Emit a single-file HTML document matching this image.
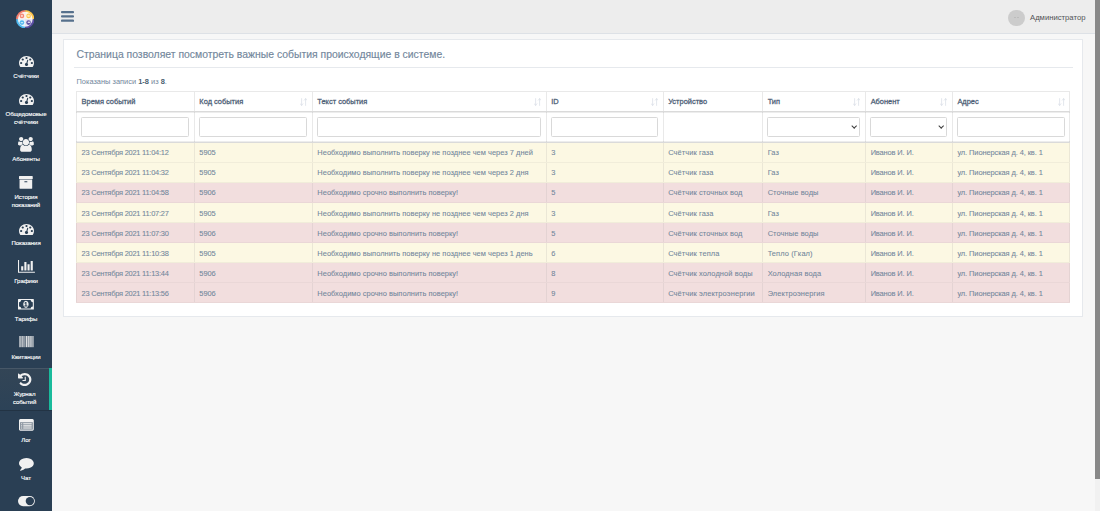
<!DOCTYPE html>
<html lang="ru">
<head>
<meta charset="utf-8">
<title>Журнал событий</title>
<style>
*{box-sizing:border-box;margin:0;padding:0}
html,body{width:1100px;height:511px;overflow:hidden}
body{background:#f7f7f7;font-family:"Liberation Sans",sans-serif;color:#73879c;font-size:7.45px;position:relative}
/* sidebar */
#side{position:absolute;left:0;top:0;width:52px;height:511px;background:#2a3f54}
#logo{position:absolute;left:15.6px;top:9.7px;width:18.5px;height:18.5px}
.ic{position:absolute;display:block;overflow:visible}
.lb{position:absolute;left:0;text-align:center;font-size:6.1px;letter-spacing:-.1px;line-height:8px;height:8px;color:#fff;-webkit-text-stroke:.12px #fff;white-space:nowrap}
#act{position:absolute;left:0;top:368.3px;width:52px;height:42.2px;background:linear-gradient(#334556,#2c4257);border-right:3.2px solid #1abb9c;box-shadow:inset 0 1px 0 rgba(255,255,255,.1),0 1px 0 rgba(0,0,0,.18)}
/* top bar */
#top{position:absolute;left:52px;top:0;width:1043px;height:33.7px;background:#ededed;border-bottom:1px solid #dde1e6}
#burger{position:absolute;left:8.5px;top:11.4px;width:13.1px;height:10.8px;display:block}
#ava{position:absolute;left:956px;top:9.5px;width:16.5px;height:16.5px;border-radius:50%;background:#ccc}
#ava i{position:absolute;top:7.8px;width:2.1px;height:.9px;background:#bcbcbc}#ava i:first-child{left:5.6px}#ava i:last-child{left:9.1px}
#adm{position:absolute;left:978px;top:12.7px;font-size:7.7px;line-height:9px;color:#515356;white-space:nowrap}
/* scrollbar */
#sbt{position:absolute;left:1094.5px;top:0;width:5.5px;height:511px;background:#f1f1f1}
#sbh{position:absolute;left:1095px;top:0;width:5px;height:478.5px;background:#888}
/* panel */
#panel{position:absolute;left:63px;top:39px;width:1020px;height:277.5px;background:#fff;border:1px solid #e6e9ed}
#title{position:absolute;left:76.5px;top:48.2px;font-size:10.41px;line-height:13px;color:#73879c;-webkit-text-stroke:.15px #73879c;white-space:nowrap}
#hr{position:absolute;left:73.5px;top:66.7px;width:999px;height:1.1px;background:#e6e9ed}
#info{position:absolute;left:76.5px;top:77px;font-size:7.45px;line-height:9px;white-space:nowrap}
#info b{color:#4b5f71}
/* table */
#tbl{position:absolute;left:76px;top:90.6px;width:993.3px;border-collapse:collapse;table-layout:fixed;font-size:7.45px}
#tbl td,#tbl th{border:1px solid #e4e4e4;padding:0 0 0 4.6px;text-align:left;vertical-align:middle;white-space:nowrap;overflow:hidden;position:relative}
#tbl th{height:20.6px;font-weight:normal;color:#4d6076;-webkit-text-stroke:.27px #4d6076;letter-spacing:0;border-color:#e9e9e9;border-bottom:1px solid #dadada;padding-top:.6px;padding-bottom:0}
#tbl tr.f td{height:30.4px;border-color:#e9e9e9;border-bottom:1px solid #dadada;background:#fff}
.ln{position:absolute;left:76px;width:994px;height:1px;background:rgba(0,0,0,.07)}
#tbl tbody tr.r td{height:20.09px;padding-top:1.4px;-webkit-text-stroke:.08px #73879c}
#tbl tr.r td:nth-child(1){letter-spacing:-.23px}
#tbl tr.r td:nth-child(2){letter-spacing:-.1px}
#tbl tr.r td:nth-child(3){letter-spacing:.03px}
#tbl tr.r td:nth-child(5){letter-spacing:.1px}
#tbl tr.r td:nth-child(6){letter-spacing:.1px}
#tbl tr.r td:nth-child(7){letter-spacing:-.13px}
#tbl tr.r td:nth-child(8){letter-spacing:-.09px}
tr.w td{background:#fcf8e3;border-color:#f1edda #ebe7d6!important}
tr.d td{background:#f2dede;border-color:#ead7d7 #e4d3d3!important}
.in{display:block;width:calc(100% - 4.1px);height:20px;margin-left:-.5px;border:1px solid #d9d9d9;border-radius:1.5px;background:#fff}
.so{position:absolute;right:4.6px;top:6.2px;width:7.2px;height:8px;display:block}
.sel{position:relative}
.sel:after{content:"";position:absolute;right:2.7px;top:6.1px;width:3.4px;height:3.4px;border-right:1.25px solid #3a3a3a;border-bottom:1.25px solid #3a3a3a;transform:rotate(45deg)}
</style>
</head>
<body>
<!--SIDE-->
<div id="side">
<svg id="logo" viewBox="0 0 100 100"><path d="M50 50V0A50 50 0 0 0 0 50z" fill="#f37e6c"/><path d="M50 50H100A50 50 0 0 0 50 0z" fill="#fdc54d"/><path d="M50 50H0A50 50 0 0 0 50 100z" fill="#4fb9f0"/><path d="M50 50V100A50 50 0 0 0 100 50z" fill="#5a4da2"/><circle cx="50" cy="50" r="40" fill="#fff" fill-opacity=".86"/><circle cx="50" cy="50" r="34" fill="none" stroke="#fff" stroke-opacity=".55" stroke-width="2"/><circle cx="32" cy="32" r="12.5" fill="#f58674"/><circle cx="68" cy="32" r="12.5" fill="#fdc551"/><circle cx="32" cy="68" r="12.5" fill="#55b9ee"/><circle cx="68" cy="68" r="12.5" fill="#5f52a6"/><circle cx="32" cy="32" r="6" fill="#fbd3cc"/><rect x="62" y="26" width="12" height="12" rx="2" fill="#fee9b4"/><rect x="25" y="65" width="14" height="6" rx="3" fill="#c4e6fa"/><ellipse cx="70" cy="66" rx="8" ry="4" fill="#e8e5f5"/></svg>
<div id="act"></div>
<svg class="ic" style="left:18.60px;top:55.80px;width:15.00px;height:11.00px" viewBox="0 256 1792 1408" preserveAspectRatio="none"><path fill="#f1f1f1" d="M384 1152q0-53-37.500-90.500t-90.500-37.500-90.500 37.500-37.500 90.500 37.500 90.500 90.500 37.500 90.500-37.500 37.500-90.500zm192-448q0-53-37.500-90.500t-90.500-37.500-90.500 37.500-37.500 90.500 37.500 90.500 90.500 37.500 90.500-37.500 37.500-90.500zm428 481l101-382q6-26-7.500-48.500t-38.500-29.500-48 6.500-30 39.500l-101 382q-60 5-107 43.500t-63 98.500q-20 77 20 146t117 89 146-20 89-117q16-60-6-117t-72-91zm660-33q0-53-37.500-90.500t-90.500-37.500-90.500 37.500-37.500 90.500 37.500 90.500 90.500 37.500 90.500-37.500 37.500-90.500zm-640-640q0-53-37.500-90.500t-90.500-37.500-90.500 37.500-37.500 90.500 37.500 90.500 90.500 37.500 90.500-37.500 37.500-90.500zm448 192q0-53-37.500-90.500t-90.500-37.500-90.500 37.500-37.500 90.500 37.500 90.500 90.500 37.500 90.500-37.500 37.500-90.500zm320 448q0 261-141 483-19 29-54 29h-1402q-35 0-54-29-141-221-141-483 0-182 71-348t191-286 286-191 348-71 348 71 286 191 191 286 71 348z"/></svg>
<div class="lb" style="top:71.60px;width:52px">Счётчики</div>
<svg class="ic" style="left:18.60px;top:94.30px;width:15.00px;height:11.00px" viewBox="0 256 1792 1408" preserveAspectRatio="none"><path fill="#f1f1f1" d="M384 1152q0-53-37.500-90.500t-90.500-37.500-90.500 37.500-37.500 90.500 37.500 90.500 90.500 37.500 90.500-37.500 37.500-90.500zm192-448q0-53-37.500-90.500t-90.500-37.500-90.500 37.500-37.500 90.500 37.500 90.500 90.500 37.500 90.500-37.500 37.500-90.500zm428 481l101-382q6-26-7.500-48.500t-38.500-29.500-48 6.500-30 39.500l-101 382q-60 5-107 43.500t-63 98.500q-20 77 20 146t117 89 146-20 89-117q16-60-6-117t-72-91zm660-33q0-53-37.500-90.500t-90.500-37.500-90.500 37.500-37.500 90.500 37.500 90.500 90.500 37.500 90.500-37.500 37.500-90.500zm-640-640q0-53-37.500-90.500t-90.500-37.500-90.500 37.500-37.500 90.500 37.500 90.500 90.500 37.500 90.500-37.500 37.500-90.500zm448 192q0-53-37.500-90.500t-90.500-37.500-90.500 37.500-37.500 90.500 37.500 90.500 90.500 37.500 90.500-37.500 37.500-90.500zm320 448q0 261-141 483-19 29-54 29h-1402q-35 0-54-29-141-221-141-483 0-182 71-348t191-286 286-191 348-71 348 71 286 191 191 286 71 348z"/></svg>
<div class="lb" style="top:109.50px;width:52px">Общедомовые</div>
<div class="lb" style="top:117.90px;width:52px">счётчики</div>
<svg class="ic" style="left:18.02px;top:137.05px;width:15.86px;height:14.80px" viewBox="0 0 1920 1792" preserveAspectRatio="none"><path fill="#f1f1f1" d="M593 896q-162 5-265 128h-134q-82 0-138-40.500t-56-118.500q0-353 124-353 6 0 43.500 21t97.500 42.500 119 21.500q67 0 133-23-5 37-5 66 0 139 81 256zm1071 637q0 120-73 189.500t-194 69.500h-874q-121 0-194-69.500t-73-189.500q0-53 3.500-103.500t14-109 26.500-108.500 43-97.500 62-81 85.500-53.500 111.500-20q10 0 43 21.500t73 48 107 48 135 21.500 135-21.500 107-48 73-48 43-21.500q61 0 111.500 20t85.500 53.500 62 81 43 97.500 26.500 108.500 14 109 3.500 103.500zm-1024-1277q0 106-75 181t-181 75-181-75-75-181 75-181 181-75 181 75 75 181zm704 384q0 159-112.500 271.500t-271.500 112.500-271.500-112.500-112.500-271.500 112.500-271.500 271.500-112.500 271.500 112.500 112.500 271.500zm576 225q0 78-56 118.500t-138 40.500h-134q-103-123-265-128 81-117 81-256 0-29-5-66 66 23 133 23 59 0 119-21.500t97.500-42.500 43.500-21q124 0 124 353zm-128-609q0 106-75 181t-181 75-181-75-75-181 75-181 181-75 181 75 75 181z"/></svg>
<div class="lb" style="top:155.30px;width:52px">Абоненты</div>
<svg class="ic" style="left:19.18px;top:176.11px;width:13.74px;height:12.69px" viewBox="64 128 1664 1536" preserveAspectRatio="none"><path fill="#f1f1f1" d="M1088 832q0-26-19-45t-45-19h-256q-26 0-45 19t-19 45 19 45 45 19h256q26 0 45-19t19-45zm576-192v960q0 26-19 45t-45 19h-1408q-26 0-45-19t-19-45v-960q0-26 19-45t45-19h1408q26 0 45 19t19 45zm64-448v256q0 26-19 45t-45 19h-1536q-26 0-45-19t-19-45v-256q0-26 19-45t45-19h1536q26 0 45 19t19 45z"/></svg>
<div class="lb" style="top:193.30px;width:52px">История</div>
<div class="lb" style="top:201.20px;width:52px">показаний</div>
<svg class="ic" style="left:18.60px;top:223.50px;width:15.00px;height:11.00px" viewBox="0 256 1792 1408" preserveAspectRatio="none"><path fill="#f1f1f1" d="M384 1152q0-53-37.500-90.500t-90.500-37.500-90.500 37.500-37.500 90.500 37.500 90.500 90.500 37.500 90.500-37.500 37.500-90.500zm192-448q0-53-37.500-90.500t-90.500-37.500-90.500 37.500-37.500 90.500 37.500 90.500 90.500 37.500 90.500-37.500 37.500-90.500zm428 481l101-382q6-26-7.500-48.500t-38.500-29.500-48 6.500-30 39.500l-101 382q-60 5-107 43.500t-63 98.500q-20 77 20 146t117 89 146-20 89-117q16-60-6-117t-72-91zm660-33q0-53-37.500-90.500t-90.500-37.500-90.500 37.500-37.500 90.500 37.500 90.500 90.500 37.500 90.500-37.500 37.500-90.500zm-640-640q0-53-37.500-90.500t-90.500-37.500-90.500 37.500-37.500 90.500 37.500 90.500 90.500 37.500 90.500-37.500 37.500-90.500zm448 192q0-53-37.500-90.500t-90.500-37.500-90.500 37.500-37.500 90.500 37.500 90.500 90.500 37.500 90.500-37.500 37.500-90.500zm320 448q0 261-141 483-19 29-54 29h-1402q-35 0-54-29-141-221-141-483 0-182 71-348t191-286 286-191 348-71 348 71 286 191 191 286 71 348z"/></svg>
<div class="lb" style="top:239.00px;width:52px">Показания</div>
<svg class="ic" style="left:17.64px;top:259.71px;width:16.91px;height:12.69px" viewBox="0 128 2048 1536" preserveAspectRatio="none"><path fill="#f1f1f1" d="M640 896v512h-256v-512h256zm384-512v1024h-256v-1024h256zm1024 1152v128h-2048v-1536h128v1408h1920zm-640-896v768h-256v-768h256zm384-384v1152h-256v-1152h256z"/></svg>
<div class="lb" style="top:276.90px;width:52px">Графики</div>
<svg class="ic" style="left:18.12px;top:298.91px;width:15.86px;height:10.57px" viewBox="0 256 1920 1280" preserveAspectRatio="none"><path fill="#f1f1f1" d="M768 1152h384v-96h-128v-448h-114l-148 137 77 80q42-37 55-57h2v288h-128v96zm512-256q0 70-21 142t-59.500 134-101.500 101-138 39-138-39-101.500-101-59.500-134-21-142 21-142 59.500-134 101.500-101 138-39 138 39 101.500 101 59.500 134 21 142zm512 256v-512q-106 0-181-75t-75-181h-1152q0 106-75 181t-181 75v512q106 0 181 75t75 181h1152q0-106 75-181t181-75zm128-832v1152q0 26-19 45t-45 19h-1792q-26 0-45-19t-19-45v-1152q0-26 19-45t45-19h1792q26 0 45 19t19 45z"/></svg>
<div class="lb" style="top:314.70px;width:52px">Тарифы</div>
<svg class="ic" style="left:18.90px;top:335.55px;width:14.6px;height:11.2px" viewBox="0 0 146 112" preserveAspectRatio="none"><g fill="#f1f1f1"><rect x="0" y="0" width="5" height="112"/><rect x="8" y="0" width="3" height="112"/><rect x="14" y="0" width="6" height="112"/><rect x="24" y="0" width="5" height="112"/><rect x="33" y="0" width="11" height="112"/><rect x="48" y="0" width="5" height="112"/><rect x="56" y="0" width="3" height="112"/><rect x="62" y="0" width="3" height="112"/><rect x="69" y="0" width="10" height="112"/><rect x="83" y="0" width="5" height="112"/><rect x="92" y="0" width="10" height="112"/><rect x="105" y="0" width="5" height="112"/><rect x="113" y="0" width="8" height="112"/><rect x="124" y="0" width="10" height="112"/><rect x="136" y="0" width="3" height="112"/><rect x="141" y="0" width="5" height="112"/></g></svg>
<div class="lb" style="top:352.60px;width:52px">Квитанции</div>
<svg class="ic" style="left:17.95px;top:373.05px;width:13.40px;height:13.00px" viewBox="0 128 1536 1536" preserveAspectRatio="none"><path fill="#f1f1f1" d="M1536 896q0 156-61 298t-164 245-245 164-298 61q-172 0-327-72.500t-264-204.500q-7-10-6.500-22.500t8.500-20.500l137-138q10-9 25-9 16 2 23 12 73 95 179 147t225 52q104 0 198.500-40.500t163.500-109.500 109.500-163.500 40.500-198.500-40.500-198.500-109.500-163.500-163.500-109.500-198.500-40.500q-98 0-188 35.500t-160 101.500l137 138q31 30 14 69-17 40-59 40h-448q-26 0-45-19t-19-45v-448q0-42 40-59 39-17 69 14l130 129q107-101 244.500-156.500t284.500-55.500q156 0 298 61t245 164 164 245 61 298zm-640-288v448q0 14-9 23t-23 9h-320q-14 0-23-9t-9-23v-64q0-14 9-23t23-9h224v-352q0-14 9-23t23-9h64q14 0 23 9t9 23z"/></svg>
<div class="lb" style="top:390.30px;width:49.1px">Журнал</div>
<div class="lb" style="top:398.30px;width:49.1px">событий</div>
<svg class="ic" style="left:18.80px;top:418.99px;width:14.80px;height:11.63px" viewBox="0 128 1792 1408" preserveAspectRatio="none"><rect x="128" y="512" width="1536" height="896" fill="#f1f1f1" fill-opacity=".5"/><path fill="#f1f1f1" d="M384 1184v64q0 13-9.500 22.500t-22.500 9.500h-64q-13 0-22.500-9.500t-9.500-22.500v-64q0-13 9.500-22.500t22.500-9.500h64q13 0 22.500 9.500t9.500 22.500zm0-256v64q0 13-9.500 22.500t-22.500 9.500h-64q-13 0-22.500-9.500t-9.500-22.500v-64q0-13 9.500-22.500t22.500-9.500h64q13 0 22.500 9.500t9.500 22.500zm0-256v64q0 13-9.500 22.500t-22.500 9.500h-64q-13 0-22.500-9.500t-9.500-22.500v-64q0-13 9.500-22.500t22.500-9.500h64q13 0 22.500 9.500t9.500 22.500zm1152 512v64q0 13-9.500 22.500t-22.500 9.500h-960q-13 0-22.500-9.500t-9.500-22.500v-64q0-13 9.500-22.500t22.500-9.500h960q13 0 22.500 9.500t9.500 22.500zm0-256v64q0 13-9.500 22.500t-22.500 9.500h-960q-13 0-22.500-9.500t-9.500-22.500v-64q0-13 9.500-22.500t22.500-9.500h960q13 0 22.500 9.500t9.500 22.500zm0-256v64q0 13-9.500 22.500t-22.500 9.500h-960q-13 0-22.500-9.500t-9.500-22.500v-64q0-13 9.500-22.500t22.500-9.500h960q13 0 22.500 9.500t9.500 22.500zm128 704v-832q0-13-9.500-22.500t-22.500-9.500h-1472q-13 0-22.500 9.500t-9.500 22.500v832q0 13 9.500 22.500t22.500 9.500h1472q13 0 22.500-9.500t9.500-22.500zm128-1088v1088q0 66-47 113t-113 47h-1472q-66 0-113-47t-47-113v-1088q0-66 47-113t113-47h1472q66 0 113 47t47 113z"/></svg>
<div class="lb" style="top:436.20px;width:52px">Лог</div>
<svg class="ic" style="left:18.80px;top:458.06px;width:14.80px;height:12.69px" viewBox="0 256 1792 1536.3" preserveAspectRatio="none"><path fill="#f1f1f1" d="M1792 896q0 174-120 321.500t-326 233-450 85.500q-70 0-145-8-198 175-460 242-49 14-114 22-17 2-30.500-9t-17.500-29v-1q-3-4-.5-12t2-10 4.500-9.500l6-9 7-8.500 8-9q7-8 31-34.500t34.500-38 31-39.500 32.500-51 27-59 26-76q-157-89-247.500-220t-90.500-281q0-130 71-248.500t191-204.500 286-136.500 348-50.500q244 0 450 85.500t326 233 120 321.500z"/></svg>
<div class="lb" style="top:474.00px;width:52px">Чат</div>
<svg class="ic" style="left:17.75px;top:496.15px;width:16.9px;height:10.2px" viewBox="0 0 169 102"><rect x="0" y="0" width="169" height="102" rx="51" fill="#f1f1f1"/><circle cx="119" cy="51" r="42" fill="#2a3f54"/></svg>
</div>
<!--/SIDE-->
<div id="top">
  <svg id="burger" viewBox="0 0 131 108"><g fill="#56708c"><rect x="0" y="0" width="131" height="22" rx="9"/><rect x="0" y="43" width="131" height="22" rx="9"/><rect x="0" y="86" width="131" height="22" rx="9"/></g></svg>
  <div id="ava"><i></i><i></i></div>
  <div id="adm">Администратор</div>
</div>
<div id="panel"></div>
<div id="title">Страница позволяет посмотреть важные события происходящие в системе.</div>
<div id="hr"></div>
<div id="info">Показаны записи <b>1-8</b> из <b>8</b>.</div>
<table id="tbl">
<colgroup><col style="width:117.75px"><col style="width:118px"><col style="width:233.8px"><col style="width:117px"><col style="width:99.5px"><col style="width:103px"><col style="width:86.75px"><col style="width:117.5px"></colgroup>
<thead>
<tr><th>Время событий</th><th>Код события<svg class="so" viewBox="0 0 72 80"><g fill="none" stroke="#d6dce5" stroke-width="7" stroke-linecap="round" stroke-linejoin="round"><path d="M16 6V74M3 58L16 74L29 58"/><path d="M56 74V6M43 22L56 6L69 22"/></g></svg></th><th>Текст события<svg class="so" viewBox="0 0 72 80"><g fill="none" stroke="#d6dce5" stroke-width="7" stroke-linecap="round" stroke-linejoin="round"><path d="M16 6V74M3 58L16 74L29 58"/><path d="M56 74V6M43 22L56 6L69 22"/></g></svg></th><th>ID<svg class="so" viewBox="0 0 72 80"><g fill="none" stroke="#d6dce5" stroke-width="7" stroke-linecap="round" stroke-linejoin="round"><path d="M16 6V74M3 58L16 74L29 58"/><path d="M56 74V6M43 22L56 6L69 22"/></g></svg></th><th>Устройство</th><th>Тип<svg class="so" viewBox="0 0 72 80"><g fill="none" stroke="#d6dce5" stroke-width="7" stroke-linecap="round" stroke-linejoin="round"><path d="M16 6V74M3 58L16 74L29 58"/><path d="M56 74V6M43 22L56 6L69 22"/></g></svg></th><th>Абонент<svg class="so" viewBox="0 0 72 80"><g fill="none" stroke="#d6dce5" stroke-width="7" stroke-linecap="round" stroke-linejoin="round"><path d="M16 6V74M3 58L16 74L29 58"/><path d="M56 74V6M43 22L56 6L69 22"/></g></svg></th><th>Адрес<svg class="so" viewBox="0 0 72 80"><g fill="none" stroke="#d6dce5" stroke-width="7" stroke-linecap="round" stroke-linejoin="round"><path d="M16 6V74M3 58L16 74L29 58"/><path d="M56 74V6M43 22L56 6L69 22"/></g></svg></th></tr>
<tr class="f"><td><span class="in"></span></td><td><span class="in"></span></td><td><span class="in"></span></td><td><span class="in"></span></td><td></td><td><span class="in sel"></span></td><td><span class="in sel"></span></td><td><span class="in"></span></td></tr>
</thead>
<tbody>
<tr class="r w"><td>23 Сентября 2021 11:04:12</td><td>5905</td><td>Необходимо выполнить поверку не позднее чем через 7 дней</td><td>3</td><td>Счётчик газа</td><td>Газ</td><td>Иванов И. И.</td><td>ул. Пионерская д. 4, кв. 1</td></tr>
<tr class="r w"><td>23 Сентября 2021 11:04:32</td><td>5905</td><td>Необходимо выполнить поверку не позднее чем через 2 дня</td><td>3</td><td>Счётчик газа</td><td>Газ</td><td>Иванов И. И.</td><td>ул. Пионерская д. 4, кв. 1</td></tr>
<tr class="r d"><td>23 Сентября 2021 11:04:58</td><td>5906</td><td>Необходимо срочно выполнить поверку!</td><td>5</td><td>Счётчик сточных вод</td><td>Сточные воды</td><td>Иванов И. И.</td><td>ул. Пионерская д. 4, кв. 1</td></tr>
<tr class="r w"><td>23 Сентября 2021 11:07:27</td><td>5905</td><td>Необходимо выполнить поверку не позднее чем через 2 дня</td><td>3</td><td>Счётчик газа</td><td>Газ</td><td>Иванов И. И.</td><td>ул. Пионерская д. 4, кв. 1</td></tr>
<tr class="r d"><td>23 Сентября 2021 11:07:30</td><td>5906</td><td>Необходимо срочно выполнить поверку!</td><td>5</td><td>Счётчик сточных вод</td><td>Сточные воды</td><td>Иванов И. И.</td><td>ул. Пионерская д. 4, кв. 1</td></tr>
<tr class="r w"><td>23 Сентября 2021 11:10:38</td><td>5905</td><td>Необходимо выполнить поверку не позднее чем через 1 день</td><td>6</td><td>Счётчик тепла</td><td>Тепло (Гкал)</td><td>Иванов И. И.</td><td>ул. Пионерская д. 4, кв. 1</td></tr>
<tr class="r d"><td>23 Сентября 2021 11:13:44</td><td>5906</td><td>Необходимо срочно выполнить поверку!</td><td>8</td><td>Счётчик холодной воды</td><td>Холодная вода</td><td>Иванов И. И.</td><td>ул. Пионерская д. 4, кв. 1</td></tr>
<tr class="r d"><td>23 Сентября 2021 11:13:56</td><td>5906</td><td>Необходимо срочно выполнить поверку!</td><td>9</td><td>Счётчик электроэнергии</td><td>Электроэнергия</td><td>Иванов И. И.</td><td>ул. Пионерская д. 4, кв. 1</td></tr>
</tbody>
</table>
<div class="ln" style="top:112px"></div><div class="ln" style="top:141px"></div>
<div id="sbt"></div><div id="sbh"></div>
</body>
</html>
